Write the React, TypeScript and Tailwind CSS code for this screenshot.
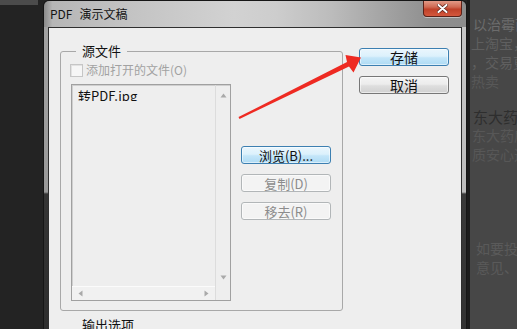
import React from "react";

type BtnKind = "blue" | "normal" | "disabled";

function Btn({ kind, size, children }: { kind: BtnKind; size: "13" | "14"; children: React.ReactNode }) {
  const kindCls =
    kind === "blue"
      ? "border-[#3c7fb1] bg-[linear-gradient(to_bottom,#eaf6fd_0%,#dcf1fc_45%,#c4e6f9_55%,#aedbf4_100%)] text-[#111111]"
      : kind === "normal"
      ? "border-[#777777] bg-[linear-gradient(to_bottom,#f4f4f4_0%,#ececec_45%,#dedede_55%,#d0d0d0_100%)] text-[#111111]"
      : "border-[#b2b6b8] bg-[#f3f3f3] text-[#8c8c8c]";
  const sizeCls = size === "14" ? "text-[14px]" : "text-[13px]";
  return (
    <div
      className={`flex h-[18px] items-center justify-center rounded-[3px] border leading-none shadow-[inset_0_0_0_1px_rgba(255,255,255,0.55)] ${kindCls} ${sizeCls}`}
    >
      {children}
    </div>
  );
}

function Tri({ dir }: { dir: "up" | "down" | "left" | "right" }) {
  const pts =
    dir === "up"
      ? "0.5,4.5 3.5,0.5 6.5,4.5"
      : dir === "down"
      ? "0.5,0.5 6.5,0.5 3.5,4.5"
      : dir === "left"
      ? "4.5,0.5 4.5,6.5 0.5,3.5"
      : "0.5,0.5 0.5,6.5 4.5,3.5";
  const w = dir === "up" || dir === "down" ? 7 : 5;
  const h = dir === "up" || dir === "down" ? 5 : 7;
  return (
    <svg width={w} height={h} viewBox={`0 0 ${w} ${h}`}>
      <polygon points={pts} fill="#a9a9a9" />
    </svg>
  );
}

function ListBox() {
  return (
    <div className="flex h-[217px] w-[160px] flex-col border border-[#a0a0a0] bg-[#eeeeee] shadow-[inset_1px_1px_0_#cfcfcf]">
      <div className="flex min-h-0 flex-1">
        <div className="flex-1 pl-[6px] pt-[3px]">
          <div className="h-[13px] overflow-hidden text-[13px] leading-[15px] text-[#111111]">转PDF.jpg</div>
        </div>
        <div className="flex w-[15px] flex-col justify-between border-l border-[#dcdcdc]">
          <div className="flex h-[20px] items-center justify-center">
            <Tri dir="up" />
          </div>
          <div className="flex h-[17px] items-center justify-center">
            <Tri dir="down" />
          </div>
        </div>
      </div>
      <div className="flex h-[14px]">
        <div className="flex flex-1 items-center justify-between border-t border-[#fbfbfb] bg-[#f1f1f1]">
          <div className="flex w-[17px] justify-center">
            <Tri dir="left" />
          </div>
          <div className="flex w-[17px] justify-center">
            <Tri dir="right" />
          </div>
        </div>
        <div className="w-[15px] border-l border-[#dcdcdc]" />
      </div>
    </div>
  );
}

export default function App() {
  return (
    <div className="relative flex h-[329px] w-[517px] overflow-hidden bg-[#232323] font-['Noto_Sans_CJK_SC','Noto_Sans',sans-serif]">
      {/* left dark desktop strip */}
      <div className="w-[43px] shrink-0">
        <div className="h-[5px] w-[38px] bg-[#4b4b4b]" />
      </div>

      {/* dialog window */}
      <div className="flex w-[424px] shrink-0 flex-col overflow-hidden rounded-t-[6px] border-x border-t border-[#161616]">
        {/* title bar */}
        <div className="flex h-[26px] shrink-0 items-center justify-between bg-[linear-gradient(90deg,#8a8a8a_0%,#b6b6b6_2%,#c3c3c3_20%,#d2d2d2_45%,#cdcdcd_55%,#bcbcbc_68%,#9d9d9d_84%,#8e8e8e_92%,#8c8c8c_100%)]">
          <div className="pl-[6px] text-[12px] leading-none text-[#141414]">
            <span>PDF</span>
            <span className="ml-[7px]">演示文稿</span>
          </div>
          <div className="mr-[4px] flex h-[16px] w-[39px] items-center justify-center self-start rounded-b-[4px] border border-t-0 border-[#5a2219] bg-[linear-gradient(to_bottom,#e29a87_0%,#cf6a53_40%,#bf4129_55%,#d4583d_100%)] shadow-[0_1px_0_rgba(255,255,255,0.45)]">
            <svg width="11" height="9" viewBox="0 0 11 9">
              <path d="M1.5 1 L9.5 8 M9.5 1 L1.5 8" stroke="#5a2219" strokeWidth="3.4" strokeLinecap="round" />
              <path d="M1.5 1 L9.5 8 M9.5 1 L1.5 8" stroke="#ffffff" strokeWidth="2" strokeLinecap="round" />
            </svg>
          </div>
        </div>

        {/* body */}
        <div className="flex min-h-0 flex-1">
          <div className="w-[4px] bg-[linear-gradient(to_bottom,#a2a2a2_0px,#999999_165px,#353535_167px,#2e2e2e_100%)]" />
          <div className="flex flex-1 border-x border-t border-[#2f2f2f] bg-[#eeeeee] pl-[11px] pr-[12px]">
            {/* left column: group boxes */}
            <div className="flex w-[283px] shrink-0 flex-col">
              <fieldset className="mt-[13px] rounded-[3px] border border-[#a8a8a8] pb-[9px]">
                <legend className="ml-[15px] h-[20px] px-[6px] text-[13px] leading-[20px] text-[#111111]">源文件</legend>
                <div className="flex h-[18px] items-center pl-[9px]">
                  <div className="h-[13px] w-[13px] border border-[#c6c6c6] bg-[#f6f6f6] shadow-[inset_1px_1px_0_#e2e2e2]" />
                  <span className="ml-[3px] text-[12px] leading-none text-[#a2a2a2]">添加打开的文件(O)</span>
                </div>
                <div className="mt-[5px] flex pl-[10px]">
                  <ListBox />
                  <div className="ml-[10px] flex w-[90px] flex-col gap-[10px] pt-[62px]">
                    <Btn kind="blue" size="13">浏览(B)...</Btn>
                    <Btn kind="disabled" size="13">复制(D)</Btn>
                    <Btn kind="disabled" size="13">移去(R)</Btn>
                  </div>
                </div>
              </fieldset>
              <fieldset className="mt-[6px] h-[60px] rounded-[3px] border border-[#a8a8a8]">
                <legend className="ml-[15px] px-[6px] pb-[12px] text-[13px] leading-[16px] text-[#111111]">输出选项</legend>
              </fieldset>
            </div>

            {/* right column: buttons */}
            <div className="ml-[16px] flex w-[90px] shrink-0 flex-col gap-[10px] pt-[20px]">
              <Btn kind="blue" size="14">存储</Btn>
              <Btn kind="normal" size="14">取消</Btn>
            </div>
          </div>
          <div className="w-[4px] bg-[linear-gradient(to_bottom,#c6c6c6_0px,#bdbdbd_165px,#3a3a3a_167px,#333333_100%)]" />
        </div>
      </div>

      {/* right background page */}
      <div className="flex min-w-0 flex-1 flex-col overflow-hidden whitespace-nowrap border-l-[3px] border-[#1c1c1c] bg-[#474747] text-[14px]">
        <div className="mt-[15px] pl-[3px] leading-[19px] text-[#6c6c6c]">以治霉菌</div>
        <div className="pl-[1px] leading-[19px] text-[#5f5f5f]">上淘宝，</div>
        <div className="pl-[1px] leading-[19px] text-[#5f5f5f]">，交易更</div>
        <div className="pl-[1px] leading-[19px] text-[#585858]">热卖</div>
        <div className="mt-[16px] pl-[3px] text-[15px] leading-[19px] text-[#2e2e2e]">东大药房</div>
        <div className="pl-[2px] leading-[19px] text-[#575757]">东大药房</div>
        <div className="pl-[2px] leading-[19px] text-[#575757]">质安心选</div>
        <div className="mt-[75px] pl-[6px] leading-[19px] text-[#5a5a5a]">如要投诉</div>
        <div className="pl-[6px] leading-[19px] text-[#5a5a5a]">意见、建</div>
      </div>

      {/* red annotation arrow */}
      <svg className="pointer-events-none absolute left-0 top-0" width="517" height="329" viewBox="0 0 517 329">
        <polygon
          points="238.5,117 347,62 345.5,55 361,57.5 353.5,72.5 349,66.5 239.5,119"
          fill="#ee2a22"
        />
      </svg>
    </div>
  );
}
